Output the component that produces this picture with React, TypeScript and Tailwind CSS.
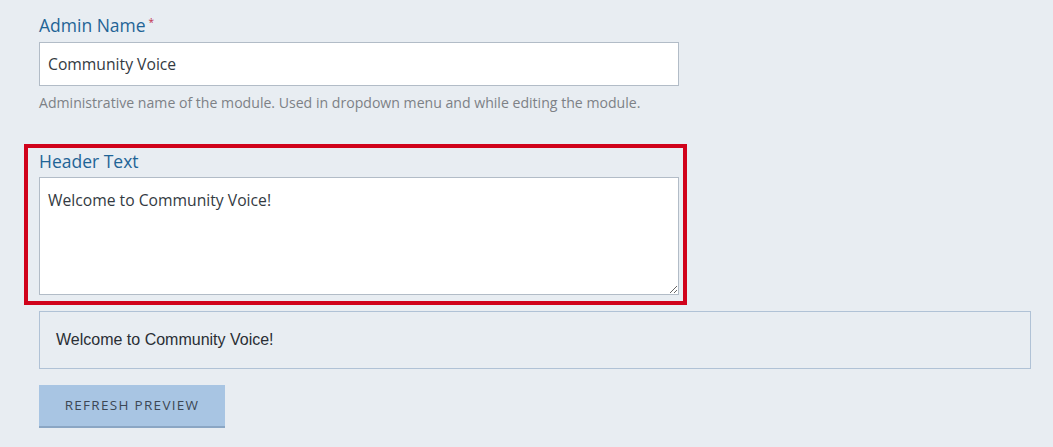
import React from "react";

export default function App() {
  const muli = { fontFamily: '"Open Sans", "Lato", sans-serif' };
  return (
    <div className="min-h-[447px] w-full bg-[#e8edf2] pl-[39px] pt-[13px] pr-[22px]" style={muli}>
      <div className="h-[29px] flex items-start">
        <span className="text-[17.5px] leading-[24px] text-[#1f6496]">Admin Name</span>
        <span className="ml-[3px] mt-[1px] text-[10px] leading-[16px] text-[#c2304e]">*</span>
      </div>
      <input
        readOnly
        value="Community Voice"
        className="block w-[640px] h-[44px] border border-[#b2bcc7] bg-white px-[8px] text-[15.7px] text-[#333a42] outline-none"
        style={muli}
      />
      <p className="mt-[7px] text-[14.1px] leading-[20px] text-[#7d8186]">
        Administrative name of the module. Used in dropdown menu and while editing the module.
      </p>
      <div className="mt-[31px] ml-[-15px] w-[663px] h-[161px] border-4 border-[#d0021b] pl-[11px] pt-[1px]">
        <div className="h-[28px] text-[17.5px] leading-[24px] text-[#1f6496]">Header Text</div>
        <textarea
          readOnly
          value="Welcome to Community Voice!"
          className="block w-[640px] h-[118px] border border-[#b2bcc7] bg-white px-[8px] py-[11px] text-[15.7px] leading-[22px] text-[#333a42] outline-none"
          style={muli}
        />
      </div>
      <div
        className="mt-[6px] h-[58px] border border-[#b0c2d6] flex items-center pl-[16px] text-[16px] text-[#2a2f35]"
        style={{ fontFamily: '"Liberation Sans", Arial, sans-serif' }}
      >
        Welcome to Community Voice!
      </div>
      <button
        className="mt-[16px] w-[186px] h-[43px] bg-[#a8c5e3] border-b-2 border-[#8aa6c4] text-[13.5px] tracking-[1.3px] text-[#3c4754] uppercase"
        style={muli}
      >
        Refresh Preview
      </button>
    </div>
  );
}
